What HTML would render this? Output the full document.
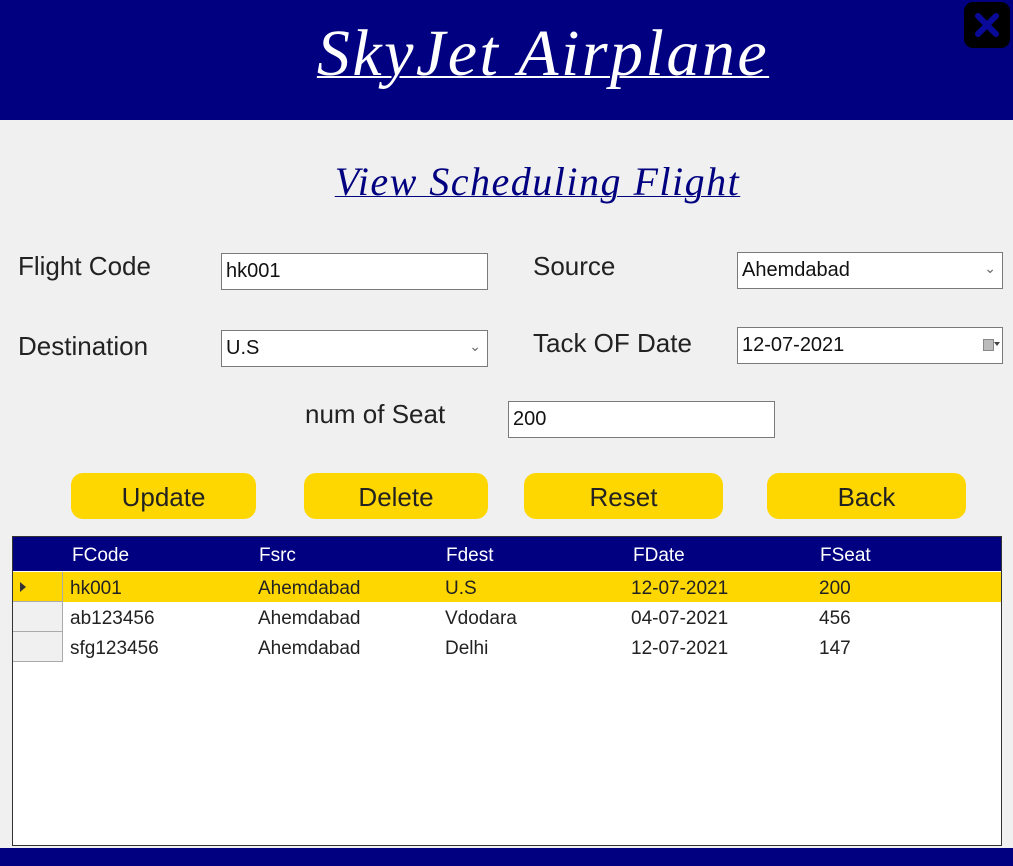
<!DOCTYPE html>
<html><head><meta charset="utf-8"><style>
*{box-sizing:border-box;margin:0;padding:0}
body{width:1013px;height:866px;background:#f0f0f0;position:relative;overflow:hidden;font-family:"Liberation Sans",sans-serif}
.a{position:absolute}
.hdr{left:0;top:0;width:1013px;height:120px;background:#000080}
.title{left:0;width:1086px;top:16px;text-align:center;font:italic 66px "Liberation Serif",serif;letter-spacing:2.5px;color:#fff;text-decoration:underline;text-decoration-thickness:2px}
.close{left:964px;top:2px;width:46px;height:46px;background:#000;border-radius:9px}
.sub{left:0;width:1075px;top:158px;text-align:center;font:italic 40px "Liberation Serif",serif;letter-spacing:1.5px;color:#000080;text-decoration:underline;text-decoration-thickness:1px}
.lbl{font-size:26px;color:#222}
.box{background:#fff;border:1px solid #7a7a7a;font-size:20px;padding:3px 4px;color:#111;height:37px;line-height:29px}
.btn{background:#ffd700;border-radius:12px;height:46px;top:473px;font-size:26px;text-align:center;line-height:48px;color:#222}
.grid{left:12px;top:536px;width:990px;height:310px;background:#fff;border:1px solid #333}
.gh{left:0;top:0;width:988px;height:34px;background:#000080;color:#fff;font-size:19px}
.row{left:0;width:988px;height:30px;font-size:19px;color:#222;line-height:34px}
.rh{left:0;width:50px;height:30px;background:#f0f0f0;border-right:1px solid #aaa;border-bottom:1px solid #aaa}
.foot{left:0;top:848px;width:1013px;height:18px;background:#000080}
</style></head><body>
<div class="a hdr"></div>
<div class="a title">SkyJet Airplane</div>
<div class="a close"><svg width="46" height="46"><path d="M14 14L32 32M32 14L14 32" stroke="#0a0a9a" stroke-width="6" stroke-linecap="round"/></svg></div>
<div class="a sub">View Scheduling Flight</div>

<div class="a lbl" style="left:18px;top:251px">Flight Code</div>
<div class="a box" style="left:221px;top:253px;width:267px">hk001</div>
<div class="a lbl" style="left:533px;top:251px">Source</div>
<div class="a box" style="left:737px;top:252px;width:266px">Ahemdabad<span style="position:absolute;right:6px;top:1px;font-size:14px;color:#666">&#8964;</span></div>

<div class="a lbl" style="left:18px;top:331px">Destination</div>
<div class="a box" style="left:221px;top:330px;width:267px">U.S<span style="position:absolute;right:6px;top:1px;font-size:14px;color:#666">&#8964;</span></div>
<div class="a lbl" style="left:533px;top:328px">Tack OF Date</div>
<div class="a box" style="left:737px;top:327px;width:266px">12-07-2021<span style="position:absolute;right:8px;top:11px;width:11px;height:12px;background:#bbb;border:1px solid #888"></span><span style="position:absolute;right:2px;top:14px;width:0;height:0;border-left:3px solid transparent;border-right:3px solid transparent;border-top:4px solid #444"></span></div>

<div class="a lbl" style="left:305px;top:399px">num of Seat</div>
<div class="a box" style="left:508px;top:401px;width:267px">200</div>

<div class="a btn" style="left:71px;width:185px">Update</div>
<div class="a btn" style="left:304px;width:184px">Delete</div>
<div class="a btn" style="left:524px;width:199px">Reset</div>
<div class="a btn" style="left:767px;width:199px">Back</div>

<div class="a grid">
<div class="a gh">
<span class="a" style="left:59px;top:8px">FCode</span><span class="a" style="left:246px;top:8px">Fsrc</span><span class="a" style="left:433px;top:8px">Fdest</span><span class="a" style="left:620px;top:8px">FDate</span><span class="a" style="left:807px;top:8px">FSeat</span>
</div>
<div class="a row" style="top:35px;background:#ffd700">
<div class="a rh" style="background:#ffd700"><span style="position:absolute;left:7px;top:10px;border-top:5px solid transparent;border-bottom:5px solid transparent;border-left:6px solid #333"></span></div>
<span class="a" style="left:57px">hk001</span><span class="a" style="left:245px">Ahemdabad</span><span class="a" style="left:432px">U.S</span><span class="a" style="left:618px">12-07-2021</span><span class="a" style="left:806px">200</span>
</div>
<div class="a row" style="top:65px">
<div class="a rh"></div>
<span class="a" style="left:57px">ab123456</span><span class="a" style="left:245px">Ahemdabad</span><span class="a" style="left:432px">Vdodara</span><span class="a" style="left:618px">04-07-2021</span><span class="a" style="left:806px">456</span>
</div>
<div class="a row" style="top:95px">
<div class="a rh"></div>
<span class="a" style="left:57px">sfg123456</span><span class="a" style="left:245px">Ahemdabad</span><span class="a" style="left:432px">Delhi</span><span class="a" style="left:618px">12-07-2021</span><span class="a" style="left:806px">147</span>
</div>
</div>
<div class="a foot"></div>
</body></html>
